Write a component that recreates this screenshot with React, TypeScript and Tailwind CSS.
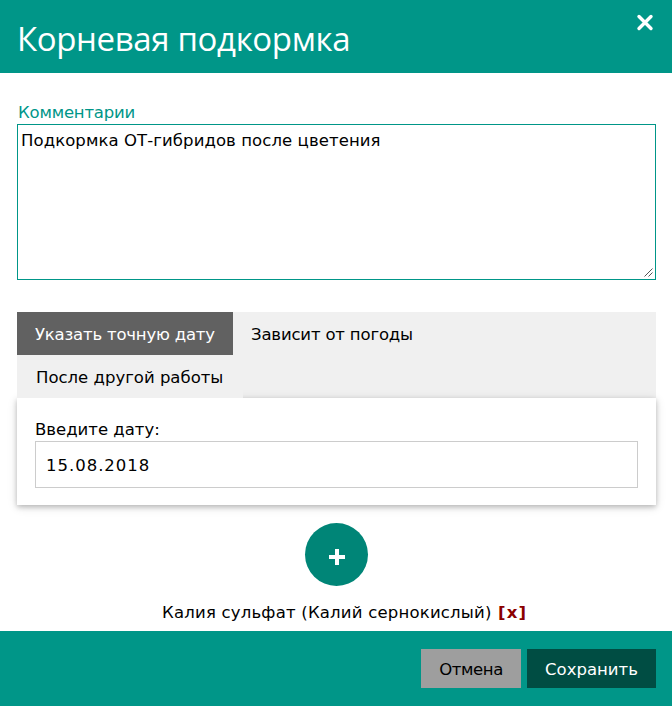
import React from 'react';

export default function App() {
  return (
    <div className="flex h-[706px] w-[672px] flex-col overflow-hidden bg-white font-['Verdana','DejaVu_Sans',sans-serif] text-[16.5px] leading-[25px] text-black">
      <header className="flex h-[73px] shrink-0 items-start justify-between bg-[#009688] pl-[17px] text-white">
        <h1 className="mt-[15px] whitespace-nowrap font-['Open_Sans',sans-serif] text-[33px] leading-[48px] tracking-[-0.36px]">Корневая подкормка</h1>
        <button aria-label="Закрыть" className="mt-[14px] mr-[18px]">
          <svg width="18" height="18" viewBox="0 0 18 18" stroke="white" strokeWidth="3.4" strokeLinecap="round"><path d="M3 2.5 15 14.5M15 2.5 3 14.5" /></svg>
        </button>
      </header>
      <main className="flex h-[558px] shrink-0 flex-col pr-4 pl-[17px] pt-[27px]">
        <label className="h-6 pl-px tracking-[-0.2px] text-[#009688]">Комментарии</label>
        <div className="flex h-[156px] w-[639px] shrink-0 items-start justify-between border border-[#009688] pl-[3px] pt-[3px]">
          <span className="whitespace-nowrap tracking-[0.08px]">Подкормка ОТ-гибридов после цветения</span>
          <svg className="mt-[140px] mr-[2px] shrink-0" width="9" height="9" viewBox="0 0 9 9" stroke="#555" strokeWidth="1"><path d="M.5 8.5 8.5.5M4.5 8.5 8.5 4.5" /></svg>
        </div>
        <nav className="mt-8 flex h-[86px] w-[639px] shrink-0 flex-wrap items-start bg-[#f0f0f0]">
          <button className="h-[43px] w-[216px] whitespace-nowrap bg-[#616161] pl-[18px] pt-[2px] text-left tracking-[-0.2px] text-white">Указать точную дату</button>
          <button className="h-[43px] w-[198px] whitespace-nowrap pl-[18px] pt-[2px] text-left tracking-[-0.17px]">Зависит от погоды</button>
          <button className="relative z-10 h-[43px] w-[226px] whitespace-nowrap bg-[#f0f0f0] pl-[19px] pt-[2px] text-left">После другой работы</button>
        </nav>
        <section className="h-[107px] w-[639px] shrink-0 bg-white px-[18px] pt-[19px] shadow-[0_2px_5px_0_rgba(0,0,0,0.22),0_2px_10px_0_rgba(0,0,0,0.12)]">
          <div className="h-6"><span>Введите дату:</span></div>
          <div className="flex h-[47px] w-[603px] items-center border border-[#ccc] pl-[10px] pt-px"><span className="tracking-[0.98px]">15.08.2018</span></div>
        </section>
        <button aria-label="Добавить" className="ml-[288px] mt-[18px] flex size-[63px] shrink-0 items-center justify-center rounded-full bg-[#008577]">
          <svg className="ml-px mt-[5px]" width="16" height="16" viewBox="0 0 16 16" fill="white"><path d="M6 0h4v6h6v4h-6v6H6v-6H0V6h6z" /></svg>
        </button>
        <div className="ml-[145px] mt-[14px] flex whitespace-nowrap"><span className="w-[336px] tracking-[0.2px]">Калия сульфат (Калий сернокислый)</span><b className="tracking-[1.2px] text-[#8b0000]">[x]</b></div>
      </main>
      <footer className="flex h-[75px] shrink-0 items-start justify-end gap-[6px] bg-[#009688] pr-4 pt-[18px]">
        <button className="h-[39px] w-[100px] bg-[#9e9e9e] pt-[2px] tracking-[-0.4px]">Отмена</button>
        <button className="h-[39px] w-[129px] bg-[#004d43] pt-[2px] text-white">Сохранить</button>
      </footer>
    </div>
  );
}
